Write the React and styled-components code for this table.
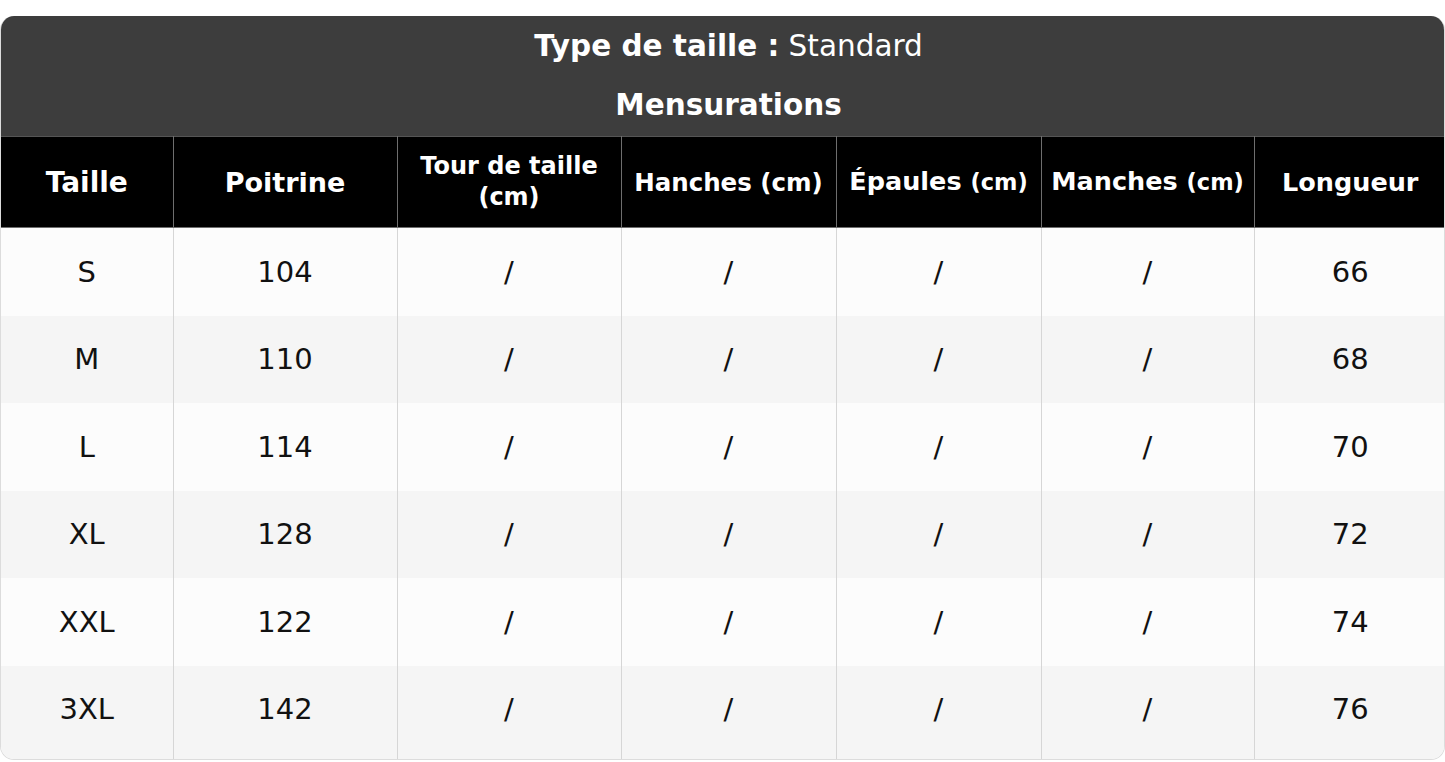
import React from 'react';
import styled, { createGlobalStyle } from 'styled-components';

const COLUMNS = [
    { label: 'Taille', width: 172, size: 28 },
    { label: 'Poitrine', width: 224, size: 27 },
    { label: 'Tour de taille (cm)', width: 224, size: 24 },
    { label: 'Hanches', unit: '(cm)', width: 215, size: 24.5 },
    { label: 'Épaules', unit: '(cm)', width: 205, size: 25.5, smallUnit: true },
    { label: 'Manches', unit: '(cm)', width: 213, size: 25.5, smallUnit: true },
    { label: 'Longueur', width: 192, size: 25.5 },
];

const ROWS = [
    ['S', '104', '/', '/', '/', '/', '66'],
    ['M', '110', '/', '/', '/', '/', '68'],
    ['L', '114', '/', '/', '/', '/', '70'],
    ['XL', '128', '/', '/', '/', '/', '72'],
    ['XXL', '122', '/', '/', '/', '/', '74'],
    ['3XL', '142', '/', '/', '/', '/', '76'],
];

const GlobalStyle = createGlobalStyle`
    body {
        margin: 0;
        background: #ffffff;
        font-family: 'DejaVu Sans', sans-serif;
    }
`;

const Page = styled.div`
    padding-top: 16px;
`;

const Card = styled.div`
    border-radius: 14px;
    overflow: hidden;
    border: 1px solid #dcdcdc;
    border-top: none;
`;

const Banner = styled.div`
    background: #3d3d3d;
    color: #ffffff;
    text-align: center;
    padding: 12px 0 13px 12px;
`;

const Title = styled.div`
    font-size: 29.5px;
    line-height: 36px;
    margin-bottom: 23px;
`;

const Strong = styled.span`
    font-weight: bold;
`;

const Subtitle = styled.div`
    font-size: 29.5px;
    font-weight: bold;
    line-height: 36px;
`;

const Table = styled.table`
    width: 100%;
    border-collapse: collapse;
    table-layout: fixed;
`;

const HeadCell = styled.th`
    background: #000000;
    color: #ffffff;
    height: 90px;
    padding: 0 4px;
    font-size: ${(p) => p.$size}px;
    line-height: 31px;
    font-weight: bold;
    text-align: center;
    border: 1px solid #6e6e6e;
    border-top: 1px solid #555555;
    &:first-child { border-left: none; }
    &:last-child { border-right: none; }
`;

const Unit = styled.span`
    font-size: ${(p) => (p.$small ? '0.88em' : '1em')};
`;

const Row = styled.tr`
    background: ${(p) => (p.$odd ? '#f5f5f5' : '#fcfcfc')};
`;

const Cell = styled.td`
    height: 87.5px;
    text-align: center;
    font-size: 29px;
    color: #111111;
    border-left: 1px solid #d6d6d6;
    padding: 0;
    &:first-child { border-left: none; }
    tr:last-child > & {
        height: 86px;
        padding-bottom: 7px;
    }
`;

const App = () => {
    return (
        <Page>
            <GlobalStyle />
            <Card>
                <Banner>
                    <Title>
                        <Strong>Type de taille :</Strong> Standard
                    </Title>
                    <Subtitle>Mensurations</Subtitle>
                </Banner>
                <Table>
                    <colgroup>
                        {COLUMNS.map((c) => (
                            <col key={c.label} style={{ width: c.width }} />
                        ))}
                    </colgroup>
                    <thead>
                        <tr>
                            {COLUMNS.map((c) => (
                                <HeadCell key={c.label} $size={c.size}>
                                    {c.label}
                                    {c.unit && (
                                        <>
                                            {' '}
                                            <Unit $small={c.smallUnit}>{c.unit}</Unit>
                                        </>
                                    )}
                                </HeadCell>
                            ))}
                        </tr>
                    </thead>
                    <tbody>
                        {ROWS.map((r, i) => (
                            <Row key={r[0]} $odd={i % 2 === 1}>
                                {r.map((v, j) => (
                                    <Cell key={j}>{v}</Cell>
                                ))}
                            </Row>
                        ))}
                    </tbody>
                </Table>
            </Card>
        </Page>
    );
};

export default App;
